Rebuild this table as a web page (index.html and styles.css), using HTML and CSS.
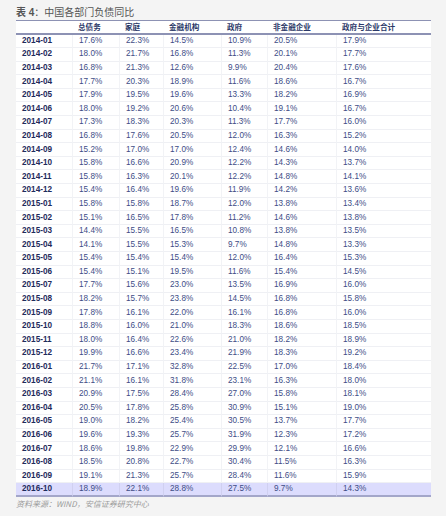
FILE: index.html
```html
<!DOCTYPE html>
<html lang="zh">
<head>
  <meta charset="UTF-8">
  <meta name="viewport" content="width=device-width, initial-scale=1.0">
  <title>中国各部门负债同比</title>
  <link rel="stylesheet" href="styles.css">
</head>
<body>
  <div class="page">
    <div class="title"><b>表 4</b>：中国各部门负债同比</div>
    <table class="debt">
      <colgroup>
        <col class="c1"><col class="c2"><col class="c3"><col class="c4"><col class="c5"><col class="c6"><col class="c7">
      </colgroup>
      <thead>
        <tr>
          <th></th><th>总债务</th><th>家庭</th><th>金融机构</th><th>政府</th><th>非金融企业</th><th>政府与企业合计</th>
        </tr>
      </thead>
      <tbody>
        <tr><td class="date">2014-01</td><td>17.6%</td><td>22.3%</td><td>14.5%</td><td>10.9%</td><td>20.5%</td><td>17.9%</td></tr>
        <tr><td class="date">2014-02</td><td>18.0%</td><td>21.7%</td><td>16.8%</td><td>11.3%</td><td>20.1%</td><td>17.7%</td></tr>
        <tr><td class="date">2014-03</td><td>16.8%</td><td>21.3%</td><td>12.6%</td><td>9.9%</td><td>20.4%</td><td>17.6%</td></tr>
        <tr><td class="date">2014-04</td><td>17.7%</td><td>20.3%</td><td>18.9%</td><td>11.6%</td><td>18.6%</td><td>16.7%</td></tr>
        <tr><td class="date">2014-05</td><td>17.9%</td><td>19.5%</td><td>19.6%</td><td>13.3%</td><td>18.2%</td><td>16.9%</td></tr>
        <tr><td class="date">2014-06</td><td>18.0%</td><td>19.2%</td><td>20.6%</td><td>10.4%</td><td>19.1%</td><td>16.7%</td></tr>
        <tr><td class="date">2014-07</td><td>17.3%</td><td>18.3%</td><td>20.3%</td><td>11.3%</td><td>17.7%</td><td>16.0%</td></tr>
        <tr><td class="date">2014-08</td><td>16.8%</td><td>17.6%</td><td>20.5%</td><td>12.0%</td><td>16.3%</td><td>15.2%</td></tr>
        <tr><td class="date">2014-09</td><td>15.2%</td><td>17.0%</td><td>17.0%</td><td>12.4%</td><td>14.6%</td><td>14.0%</td></tr>
        <tr><td class="date">2014-10</td><td>15.8%</td><td>16.6%</td><td>20.9%</td><td>12.2%</td><td>14.3%</td><td>13.7%</td></tr>
        <tr><td class="date">2014-11</td><td>15.8%</td><td>16.3%</td><td>20.1%</td><td>12.2%</td><td>14.8%</td><td>14.1%</td></tr>
        <tr><td class="date">2014-12</td><td>15.4%</td><td>16.4%</td><td>19.6%</td><td>11.9%</td><td>14.2%</td><td>13.6%</td></tr>
        <tr><td class="date">2015-01</td><td>15.8%</td><td>15.8%</td><td>18.7%</td><td>12.0%</td><td>13.8%</td><td>13.4%</td></tr>
        <tr><td class="date">2015-02</td><td>15.1%</td><td>16.5%</td><td>17.8%</td><td>11.2%</td><td>14.6%</td><td>13.8%</td></tr>
        <tr><td class="date">2015-03</td><td>14.4%</td><td>15.5%</td><td>16.5%</td><td>10.8%</td><td>13.8%</td><td>13.5%</td></tr>
        <tr><td class="date">2015-04</td><td>14.1%</td><td>15.5%</td><td>15.3%</td><td>9.7%</td><td>14.8%</td><td>13.3%</td></tr>
        <tr><td class="date">2015-05</td><td>15.4%</td><td>15.4%</td><td>15.4%</td><td>12.0%</td><td>16.4%</td><td>15.3%</td></tr>
        <tr><td class="date">2015-06</td><td>15.4%</td><td>15.1%</td><td>19.5%</td><td>11.6%</td><td>15.4%</td><td>14.5%</td></tr>
        <tr><td class="date">2015-07</td><td>17.7%</td><td>15.6%</td><td>23.0%</td><td>13.5%</td><td>16.9%</td><td>16.0%</td></tr>
        <tr><td class="date">2015-08</td><td>18.2%</td><td>15.7%</td><td>23.8%</td><td>14.5%</td><td>16.8%</td><td>15.8%</td></tr>
        <tr><td class="date">2015-09</td><td>17.8%</td><td>16.1%</td><td>22.0%</td><td>16.1%</td><td>16.8%</td><td>16.0%</td></tr>
        <tr><td class="date">2015-10</td><td>18.8%</td><td>16.0%</td><td>21.0%</td><td>18.3%</td><td>18.6%</td><td>18.5%</td></tr>
        <tr><td class="date">2015-11</td><td>18.0%</td><td>16.4%</td><td>22.6%</td><td>21.0%</td><td>18.2%</td><td>18.9%</td></tr>
        <tr><td class="date">2015-12</td><td>19.9%</td><td>16.6%</td><td>23.4%</td><td>21.9%</td><td>18.3%</td><td>19.2%</td></tr>
        <tr><td class="date">2016-01</td><td>21.7%</td><td>17.1%</td><td>32.8%</td><td>22.5%</td><td>17.0%</td><td>18.4%</td></tr>
        <tr><td class="date">2016-02</td><td>21.1%</td><td>16.1%</td><td>31.8%</td><td>23.1%</td><td>16.3%</td><td>18.0%</td></tr>
        <tr><td class="date">2016-03</td><td>20.9%</td><td>17.5%</td><td>28.4%</td><td>27.0%</td><td>15.8%</td><td>18.1%</td></tr>
        <tr><td class="date">2016-04</td><td>20.5%</td><td>17.8%</td><td>25.8%</td><td>30.9%</td><td>15.1%</td><td>19.0%</td></tr>
        <tr><td class="date">2016-05</td><td>19.0%</td><td>18.2%</td><td>25.4%</td><td>30.5%</td><td>13.7%</td><td>17.7%</td></tr>
        <tr><td class="date">2016-06</td><td>19.6%</td><td>19.3%</td><td>25.7%</td><td>31.9%</td><td>12.3%</td><td>17.2%</td></tr>
        <tr><td class="date">2016-07</td><td>18.6%</td><td>19.8%</td><td>22.9%</td><td>29.9%</td><td>12.1%</td><td>16.6%</td></tr>
        <tr><td class="date">2016-08</td><td>18.5%</td><td>20.8%</td><td>22.7%</td><td>30.4%</td><td>11.5%</td><td>16.3%</td></tr>
        <tr><td class="date">2016-09</td><td>19.1%</td><td>21.3%</td><td>25.7%</td><td>28.4%</td><td>11.6%</td><td>15.9%</td></tr>
        <tr class="latest"><td class="date">2016-10</td><td>18.9%</td><td>22.1%</td><td>28.8%</td><td>27.5%</td><td>9.7%</td><td>14.3%</td></tr>
      </tbody>
    </table>
    <div class="source">资料来源：WIND，安信证券研究中心</div>
  </div>
</body>
</html>
```

FILE: styles.css
```css
body {
  margin: 0;
  background: #f4f4f4;
  font-family: "Liberation Sans", Arial, "Noto Sans CJK SC", sans-serif;
}

.page {
  padding: 5px 0 0 16px;
}

.title {
  font-family: "Noto Sans CJK SC", sans-serif;
  font-size: 10px;
  line-height: 14px;
  color: #555;
}

.title b {
  font-family: "Liberation Sans", "Noto Sans CJK SC", sans-serif;
  font-weight: bold;
}

.debt {
  width: 415px;
  table-layout: fixed;
  border-collapse: separate;
  border-spacing: 0;
  background: #fff;
  border-top: 1.5px solid #8d92b4;
}

.c1 { width: 56px; }
.c2 { width: 47px; }
.c3 { width: 44px; }
.c4 { width: 58px; }
.c5 { width: 46px; }
.c6 { width: 69px; }
.c7 { width: 95px; }

.debt thead tr {
  height: 13.5px;
}

.debt th {
  padding: 0 0 0 6px;
  text-align: left;
  font-family: "Noto Sans CJK SC", sans-serif;
  font-size: 7.6px;
  font-weight: bold;
  line-height: 10px;
  color: #2b3868;
  border-bottom: 2px solid #8d92b4;
}

.debt tbody tr {
  height: 13.6px;
}

.debt td {
  padding: 0 0 0 6px;
  font-size: 8.2px;
  line-height: 10px;
  color: #3e4d86;
  border-bottom: 1px solid #eff0f4;
  border-left: 1px solid #f2f3f6;
  white-space: nowrap;
}

.debt td:first-child {
  border-left: none;
}

.debt td.date {
  font-weight: bold;
  color: #1f2b5c;
}

.debt tr.latest td {
  background: #dcdcfd;
  border-bottom: 2px solid #a3a6c9;
  border-left-color: #d0d0f0;
}

.source {
  font-family: "Noto Sans CJK SC", sans-serif;
  font-size: 8px;
  font-style: italic;
  line-height: 12px;
  margin-top: 1px;
  color: #9b9b9b;
}
```
